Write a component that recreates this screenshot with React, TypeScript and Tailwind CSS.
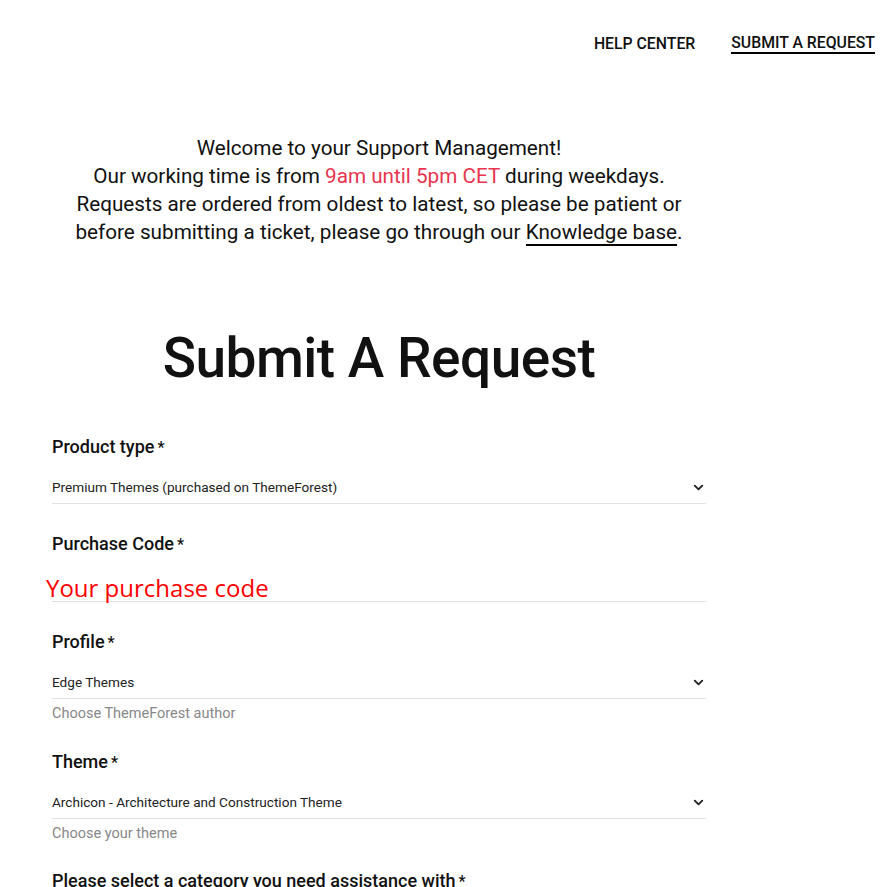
import { ChevronDown } from "lucide-react";

const font = { fontFamily: "Roboto, 'Noto Sans', sans-serif" };

const Label = ({ text }: { text: string }) => (
  <div className="text-[18px] font-medium text-[#111] leading-[24px]">
    {text}
    <span className="ml-[3px] text-[16px]">*</span>
  </div>
);

const SelectField = ({ label, value, hint }: { label: string; value: string; hint?: string }) => (
  <div className={hint ? "mb-[26px]" : "mb-[28px]"}>
    <Label text={label} />
    <div className="mt-[18px] flex items-center justify-between border-b border-[#e2e2e2] pb-[7px]">
      <span className="text-[13.6px] leading-[18px] text-[#222]">{value}</span>
      <ChevronDown size={15} strokeWidth={3} className="text-[#222]" />
    </div>
    {hint && <div className="mt-[5px] text-[14.5px] leading-[20px] text-[#888]">{hint}</div>}
  </div>
);

export default function App() {
  return (
    <div className="min-h-screen bg-white text-[#111]" style={font}>
      {/* top nav */}
      <nav className="flex justify-end gap-[36px] pt-[34px] pr-[7px] text-[15.8px] font-medium">
        <a href="#" className="leading-[20px]">HELP CENTER</a>
        <a href="#" className="border-b-2 border-black leading-[18px]">SUBMIT A REQUEST</a>
      </nav>

      <main className="w-[758px] px-[52px]">
        {/* intro */}
        <div className="mt-[80px] text-center text-[20.7px] leading-[28px]">
          <p>Welcome to your Support Management!</p>
          <p>
            Our working time is from <span className="text-[#e8344e]">9am until 5pm CET</span> during weekdays.
          </p>
          <p>Requests are ordered from oldest to latest, so please be patient or</p>
          <p>
            before submitting a ticket, please go through our{" "}
            <a href="#" className="border-b-2 border-black">Knowledge base</a>.
          </p>
        </div>

        <h1 className="mt-[82px] text-center text-[55px] font-medium leading-[60px] tracking-[-0.5px]">
          Submit A Request
        </h1>

        {/* form */}
        <form className="mt-[47px]">
          <SelectField label="Product type" value="Premium Themes (purchased on ThemeForest)" />

          <div className="mb-[28px]">
            <Label text="Purchase Code" />
            <div className="mt-[18px] border-b border-[#e2e2e2]">
              <div
                className="-ml-[6px] text-[24px] leading-[26px] text-[#ff0000]"
                style={{ fontFamily: "'Open Sans', sans-serif" }}
              >
                Your purchase code
              </div>
            </div>
          </div>

          <SelectField label="Profile" value="Edge Themes" hint="Choose ThemeForest author" />
          <SelectField
            label="Theme"
            value="Archicon - Architecture and Construction Theme"
            hint="Choose your theme"
          />
          <div className="-mt-px">
            <Label text="Please select a category you need assistance with" />
          </div>
        </form>
      </main>
    </div>
  );
}
